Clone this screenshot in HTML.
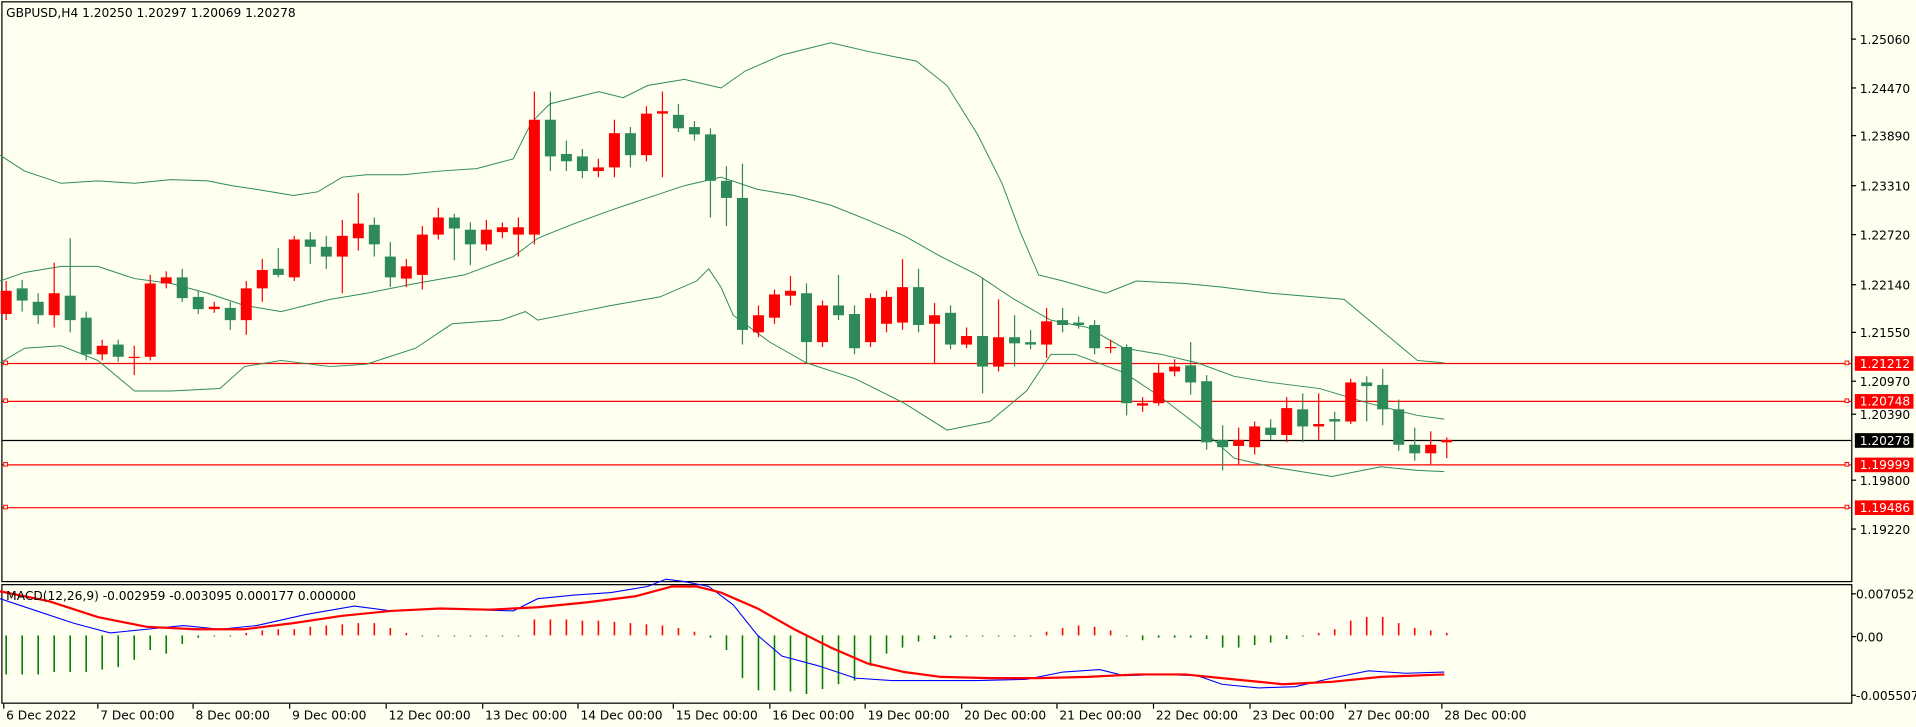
<!DOCTYPE html>
<html><head><meta charset="utf-8"><style>
html,body{margin:0;padding:0;background:#fffff0;overflow:hidden}
svg{display:block}
text{font-family:"DejaVu Sans","Liberation Sans",sans-serif;font-size:10px;fill:#000}
</style></head><body>
<svg id="s" width="1916" height="727" viewBox="0 0 1568 595" xmlns="http://www.w3.org/2000/svg">
<rect x="0" y="0" width="1568" height="595" fill="#fffff0"/>
<rect x="1.5" y="1.5" width="1514" height="474.5" fill="none" stroke="#000" stroke-width="1"/>
<rect x="1.5" y="478.5" width="1514" height="97" fill="none" stroke="#000" stroke-width="1"/>
<g id="g"></g>
<text x="5" y="14">GBPUSD,H4  1.20250 1.20297 1.20069 1.20278</text>
<text x="5" y="491">MACD(12,26,9) -0.002959 -0.003095 0.000177 0.000000</text>
<g id="ax"></g>
</svg>
<script>
var NS="http://www.w3.org/2000/svg",g=document.getElementById('g'),ax=document.getElementById('ax');
function el(p,t,a,txt){var e=document.createElementNS(NS,t);for(var k in a)e.setAttribute(k,a[k]);if(txt)e.textContent=txt;p.appendChild(e);return e;}
function pl(pts,c,w){el(g,'polyline',{points:pts.map(function(p){return p.join(',')}).join(' '),fill:'none',stroke:c,'stroke-width':w});}
var G='#2e8b57',R='#ff0000';
// horizontal lines
[[297,R],[328,R],[380,R],[415,R]].forEach(function(l){el(g,'line',{x1:2,x2:1515,y1:l[0]+.5,y2:l[0]+.5,stroke:l[1],'stroke-width':1});el(g,'rect',{x:3,y:l[0]-1.5,width:3,height:3,fill:'#fffff0',stroke:R,'stroke-width':.8});el(g,'rect',{x:1510,y:l[0]-1.5,width:3,height:3,fill:'#fffff0',stroke:R,'stroke-width':.8});});
el(g,'line',{x1:2,x2:1515,y1:360.5,y2:360.5,stroke:'#000','stroke-width':1});
// bollinger
pl([[0,127],[20,140],[50,150],[80,148],[110,150],[140,147],[170,148],[190,152],[210,155],[240,160],[260,157],[280,145],[300,143],[330,143],[360,140],[390,138],[420,130],[435,100],[450,85],[470,80],[490,75],[510,80],[530,70],[560,65],[590,72],[610,58],[640,45],[680,35],[710,42],[750,50],[775,70],[800,110],[820,150],[835,190],[850,225],[870,230],[905,240],[930,230],[970,232],[1000,235],[1040,240],[1100,245],[1130,270],[1160,295],[1182,297]],G,0.8);
pl([[0,230],[20,223],[50,218],[80,218],[110,228],[140,232],[170,240],[200,250],[230,255],[270,245],[300,240],[340,232],[380,225],[420,210],[440,195],[470,183],[500,172],[530,162],[560,152],[590,145],[620,155],[650,160],[680,168],[710,180],[740,193],[770,210],[800,225],[830,245],[860,262],[890,268],[920,285],[950,290],[980,297],[1010,308],[1040,313],[1080,318],[1120,330],[1160,340],[1182,343]],G,0.8);
pl([[0,297],[20,285],[50,283],[80,295],[110,320],[140,320],[180,318],[200,300],[230,295],[270,300],[300,298],[340,285],[370,265],[410,262],[430,255],[440,262],[470,256],[500,250],[540,243],[570,230],[580,220],[590,235],[600,258],[630,280],[660,297],[700,310],[740,330],[775,352],[810,345],[840,320],[860,290],[880,290],[920,305],[950,325],[980,348],[1010,375],[1040,382],[1090,390],[1130,382],[1160,385],[1182,386]],G,0.8);
// candles: color, bodyTop, bodyBot, wickTop, wickBot
var C=[
['r',238,257,230,262],['g',236,246,229,255],['g',247,258,240,265],['r',240,258,215,268],['g',242,262,195,272],['g',260,290,255,295],['r',283,290,278,295],['g',282,292,278,296],['r',292,293,283,307],['r',232,292,225,295],
['r',227,232,222,236],['g',227,244,220,247],['g',243,253,238,257],['r',251,253,247,256],['g',252,262,247,270],['r',236,262,230,274],['r',221,236,212,247],['g',220,225,203,227],['r',196,227,193,230],['g',196,202,190,216],
['g',202,210,193,220],['r',193,210,180,240],['r',183,195,158,205],['g',184,200,178,210],['g',210,227,198,235],['r',218,228,212,235],['r',192,225,185,237],['r',178,192,170,196],['g',178,187,175,213],['g',188,200,182,217],
['r',188,200,180,205],['r',186,190,182,195],['r',186,192,178,210],['r',98,192,75,200],['g',98,128,75,140],['g',126,132,115,140],['g',128,140,122,146],['r',137,140,130,145],['r',109,137,98,145],['g',109,127,104,137],
['r',93,127,87,132],['r',91,93,75,145],['g',94,105,85,108],['g',104,110,99,115],['g',110,148,105,178],['g',148,162,136,185],['g',162,270,134,282],['r',258,272,250,276],['r',241,260,237,265],['r',238,242,226,250],
['g',240,280,232,297],['r',250,280,246,284],['g',250,258,225,262],['g',257,285,250,290],['r',244,280,240,284],['r',243,265,238,272],['r',235,264,212,270],['g',235,266,220,272],['r',258,265,248,298],['g',256,282,250,286],
['r',275,282,268,285],['g',275,300,228,322],['r',276,300,245,304],['g',276,281,258,300],['g',280,282,270,286],['r',263,282,252,293],['g',262,266,252,272],['g',264,266,259,269],['g',266,285,262,290],['r',284,285,278,289],
['g',284,330,282,340],['r',330,332,325,337],['r',305,330,298,332],['r',300,304,294,308],['g',299,313,280,323],['g',312,362,307,368],['g',360,366,348,385],['r',360,365,350,380],['r',349,366,345,372],['g',350,356,343,360],
['r',334,356,325,362],['g',335,349,322,362],['r',347,349,322,360],['g',343,345,337,360],['r',313,345,310,347],['g',313,316,308,345],['g',315,335,302,348],['g',335,364,327,369],['g',364,371,350,377],['r',364,371,353,380],['r',360,362,358,375]];
C.forEach(function(c,i){var x=5+13.1*i,col=c[0]=='r'?R:G;
el(g,'line',{x1:x,x2:x,y1:c[3],y2:c[4],stroke:col,'stroke-width':1});
el(g,'rect',{x:x-4.5,y:c[1],width:9,height:Math.max(1,c[2]-c[1]),fill:col});});
// histogram
var H=[552,552,552,550,550,550,548,546,540,532,535,527,522,521,521,518,516,515,515,513,512,511,510,510,514,518,520,521,521,521,521,521,521,507,507,507,508,508,509,510,511,512,514,517,522,532,555,565,565,566,568,564,560,557,545,535,530,525,523,522,521,521,521,521,521,517,514,512,513,516,520,524,522,522,522,523,530,530,528,526,523,521,518,515,508,505,505,510,514,516,518];
H.forEach(function(h,i){var x=5+13.1*i;if(Math.abs(h-520)<1.5){el(g,'rect',{x:x-.5,y:520,width:1.2,height:1,fill:'#2e8b57'});return;}
el(g,'line',{x1:x,x2:x,y1:520,y2:h,stroke:h<520?R:'#008000','stroke-width':1.3});});
pl([[0,490],[30,500],[60,510],[90,518],[120,515],[150,512],[180,515],[210,512],[250,503],[290,496],[320,500],[360,498],[420,500],[440,490],[470,487],[500,485],[530,480],[545,474],[560,476],[580,480],[600,495],[620,520],[640,537],[670,545],[700,555],[730,557],[760,557],[800,557],[840,556],[870,550],[900,548],[920,553],[950,552],[980,553],[1000,560],[1030,563],[1060,562],[1090,555],[1120,549],[1150,551],[1182,550]],'#0000ff',0.9);
pl([[0,484],[40,492],[80,505],[120,513],[160,515],[200,515],[240,510],[280,504],[320,500],[360,498],[400,499],[440,497],[480,493],[520,488],[550,480],[570,480],[590,485],[620,498],[650,515],[680,530],[710,543],[740,550],[770,554],[810,555],[850,555],[890,554],[930,552],[970,552],[1010,556],[1050,560],[1090,558],[1130,554],[1182,552]],R,1.8);
// axis labels
[['1.25060',32],['1.24470',72],['1.23890',111],['1.23310',152],['1.22720',192],['1.22140',233],['1.21550',272],['1.20970',312],['1.20390',339],['1.19800',393],['1.19220',433]].forEach(function(l){el(ax,'line',{x1:1515,x2:1519,y1:l[1],y2:l[1],stroke:'#000'});el(ax,'text',{x:1522,y:l[1]+4},l[0]);});
[['1.21212',297,R],['1.20748',328,R],['1.20278',360,'#000'],['1.19999',380,R],['1.19486',415,R]].forEach(function(l){el(ax,'rect',{x:1518,y:l[1]-5.5,width:48,height:12,fill:l[2]});el(ax,'text',{x:1522,y:l[1]+4,style:'fill:#fff'},l[0]);});
[['0.007052',486],['0.00',521],['-0.005507',569]].forEach(function(l){el(ax,'line',{x1:1515,x2:1519,y1:l[1],y2:l[1],stroke:'#000'});el(ax,'text',{x:1519,y:l[1]+4},l[0]);});
[['6 Dec 2022',3],['7 Dec 00:00',80],['8 Dec 00:00',158],['9 Dec 00:00',237],['12 Dec 00:00',316],['13 Dec 00:00',395],['14 Dec 00:00',473],['15 Dec 00:00',551],['16 Dec 00:00',630],['19 Dec 00:00',708],['20 Dec 00:00',787],['21 Dec 00:00',865],['22 Dec 00:00',944],['23 Dec 00:00',1023],['27 Dec 00:00',1101],['28 Dec 00:00',1180]].forEach(function(l){el(ax,'line',{x1:l[1],x2:l[1],y1:576,y2:580,stroke:'#000'});el(ax,'text',{x:l[1]+2,y:589},l[0]);});
</script>
</body></html>
